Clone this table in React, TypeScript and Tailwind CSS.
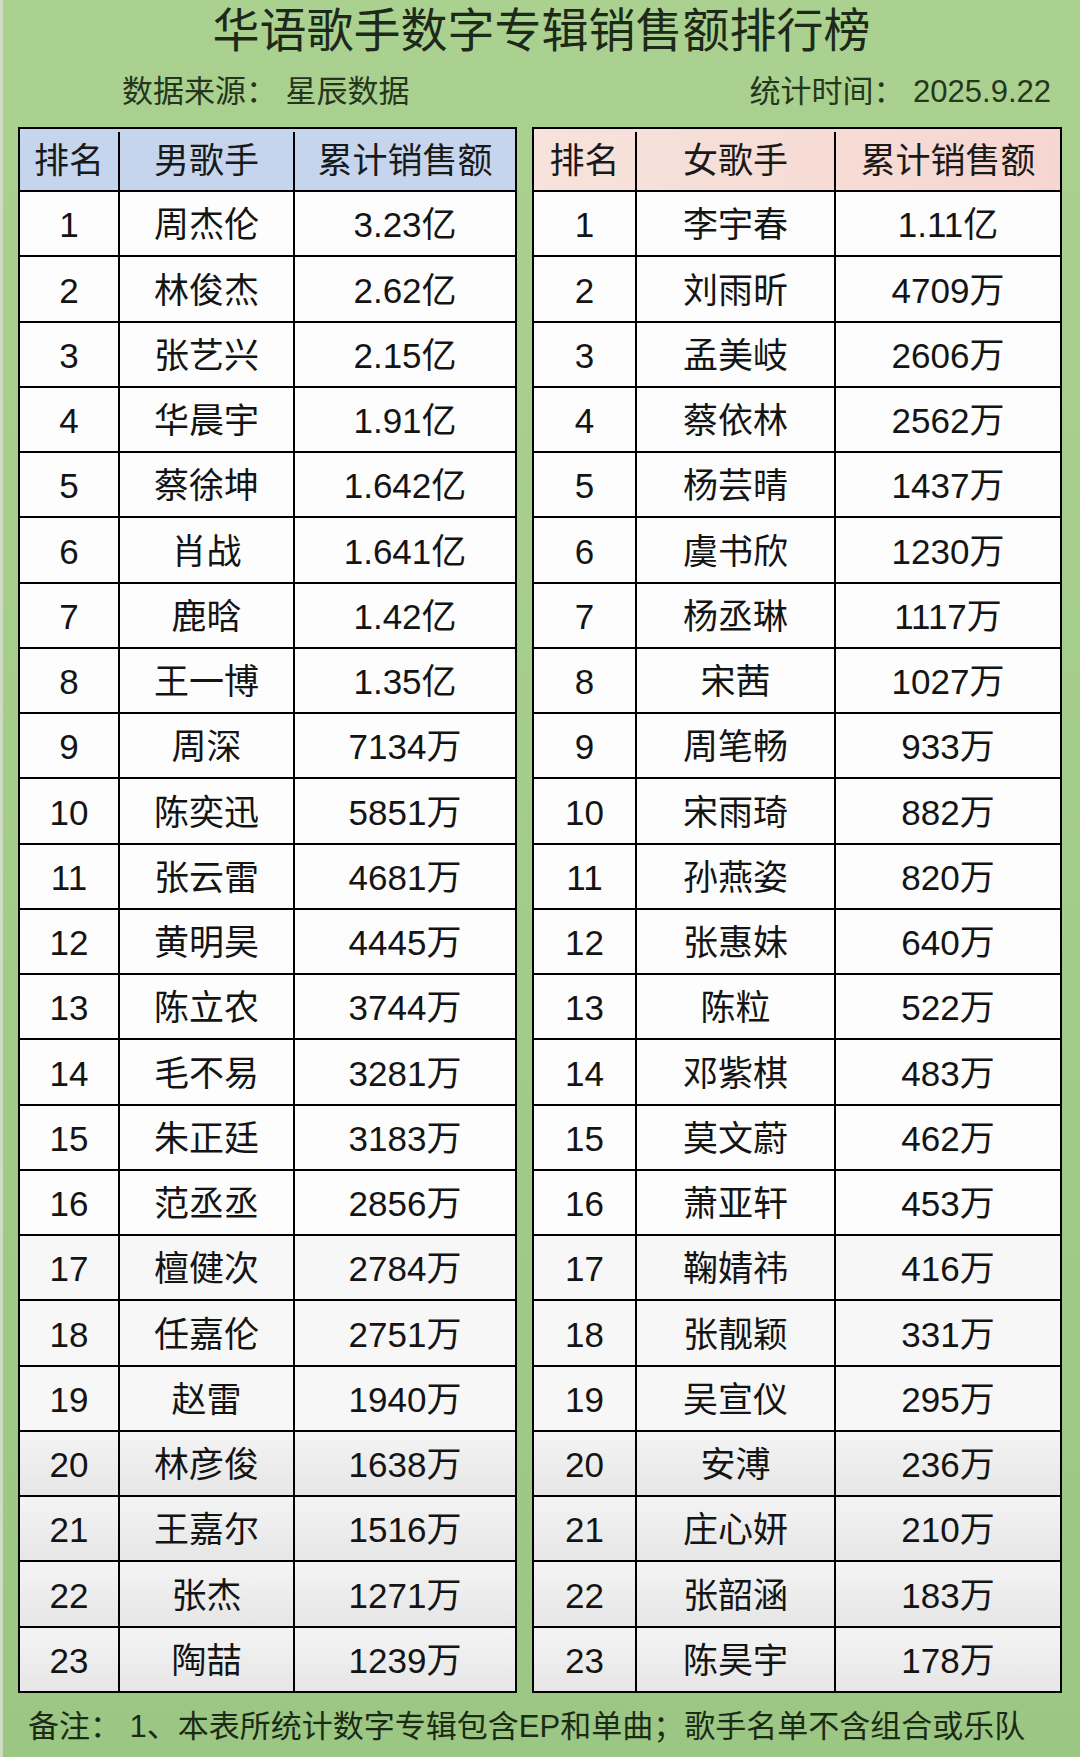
import React from 'react';

type Row = [number, string, string];

const male: Row[] = [
  [1, '周杰伦', '3.23亿'],
  [2, '林俊杰', '2.62亿'],
  [3, '张艺兴', '2.15亿'],
  [4, '华晨宇', '1.91亿'],
  [5, '蔡徐坤', '1.642亿'],
  [6, '肖战', '1.641亿'],
  [7, '鹿晗', '1.42亿'],
  [8, '王一博', '1.35亿'],
  [9, '周深', '7134万'],
  [10, '陈奕迅', '5851万'],
  [11, '张云雷', '4681万'],
  [12, '黄明昊', '4445万'],
  [13, '陈立农', '3744万'],
  [14, '毛不易', '3281万'],
  [15, '朱正廷', '3183万'],
  [16, '范丞丞', '2856万'],
  [17, '檀健次', '2784万'],
  [18, '任嘉伦', '2751万'],
  [19, '赵雷', '1940万'],
  [20, '林彦俊', '1638万'],
  [21, '王嘉尔', '1516万'],
  [22, '张杰', '1271万'],
  [23, '陶喆', '1239万'],
];

const female: Row[] = [
  [1, '李宇春', '1.11亿'],
  [2, '刘雨昕', '4709万'],
  [3, '孟美岐', '2606万'],
  [4, '蔡依林', '2562万'],
  [5, '杨芸晴', '1437万'],
  [6, '虞书欣', '1230万'],
  [7, '杨丞琳', '1117万'],
  [8, '宋茜', '1027万'],
  [9, '周笔畅', '933万'],
  [10, '宋雨琦', '882万'],
  [11, '孙燕姿', '820万'],
  [12, '张惠妹', '640万'],
  [13, '陈粒', '522万'],
  [14, '邓紫棋', '483万'],
  [15, '莫文蔚', '462万'],
  [16, '萧亚轩', '453万'],
  [17, '鞠婧祎', '416万'],
  [18, '张靓颖', '331万'],
  [19, '吴宣仪', '295万'],
  [20, '安溥', '236万'],
  [21, '庄心妍', '210万'],
  [22, '张韶涵', '183万'],
  [23, '陈昊宇', '178万'],
];

const Table = ({ rows, side }: { rows: Row[]; side: 'male' | 'female' }) => {
  const isMale = side === 'male';
  const c1 = isMale ? 'w-[98px]' : 'w-[101px]';
  const c2 = isMale ? 'w-[175px]' : 'w-[199px]';

  return (
    <div
      className={
        'flex flex-col border-2 border-black ' + (isMale ? 'w-[499px]' : 'w-[530px]')
      }
    >
      <div
        className={
          'flex h-[61px] pt-[3px] text-[35px] text-[#1a1a1a] ' +
          (isMale ? 'bg-[#c6d5ee]' : 'bg-linear-to-r from-[#f7e3dc] to-[#f6d6d0]')
        }
      >
        <div className={c1 + ' flex items-center justify-center'}>排名</div>
        <div className={c2 + ' flex items-center justify-center border-l-2 border-black'}>
          {isMale ? '男歌手' : '女歌手'}
        </div>
        <div className="flex-1 flex items-center justify-center border-l-2 border-black">
          累计销售额
        </div>
      </div>
      {rows.map(([rank, name, sales]) => (
        <div
          key={rank}
          className={
            'flex h-[65.25px] border-t-2 border-black text-[35px] text-[#141414] ' +
            (rank >= 20
              ? 'bg-linear-to-b from-[#f4f4f4] to-[#e6e6e6]'
              : rank >= 17
              ? 'bg-[#f7f7f7]'
              : 'bg-[#fdfdfd]')
          }
        >
          <div className={c1 + ' flex items-center justify-center pt-[4px]'}>{rank}</div>
          <div
            className={
              c2 + ' flex items-center justify-center border-l-2 border-black pt-[4px]'
            }
          >
            {name}
          </div>
          <div className="flex-1 flex items-center justify-center border-l-2 border-black pt-[4px]">
            {sales}
          </div>
        </div>
      ))}
    </div>
  );
};

export default function App() {
  return (
    <div
      className="w-[1080px] h-[1757px] flex flex-col bg-linear-to-b from-[#abd190] to-[#9cc683] border-l-[3px] border-[#cfdcc4] overflow-hidden"
      style={{ fontFamily: '"Liberation Sans", "Noto Sans CJK SC", sans-serif' }}
    >
      <h1 className="pt-[4px] text-center text-[47px] leading-[54px] text-[#1e2a19] font-normal">
        华语歌手数字专辑销售额排行榜
      </h1>
      <div className="mt-[16px] flex justify-between pl-[119px] pr-[29px] text-[31px] leading-[36px] text-[#25361d]">
        <span>数据来源： 星辰数据</span>
        <span>统计时间： 2025.9.22</span>
      </div>
      <div className="mt-[17px] flex gap-[15px] pl-[15px]">
        <Table rows={male} side="male" />
        <Table rows={female} side="female" />
      </div>
      <p className="mt-[14px] pl-[25px] text-[31px] leading-[40px] text-[#1c2b15] whitespace-nowrap">
        备注： 1、本表所统计数字专辑包含EP和单曲；歌手名单不含组合或乐队
      </p>
    </div>
  );
}
